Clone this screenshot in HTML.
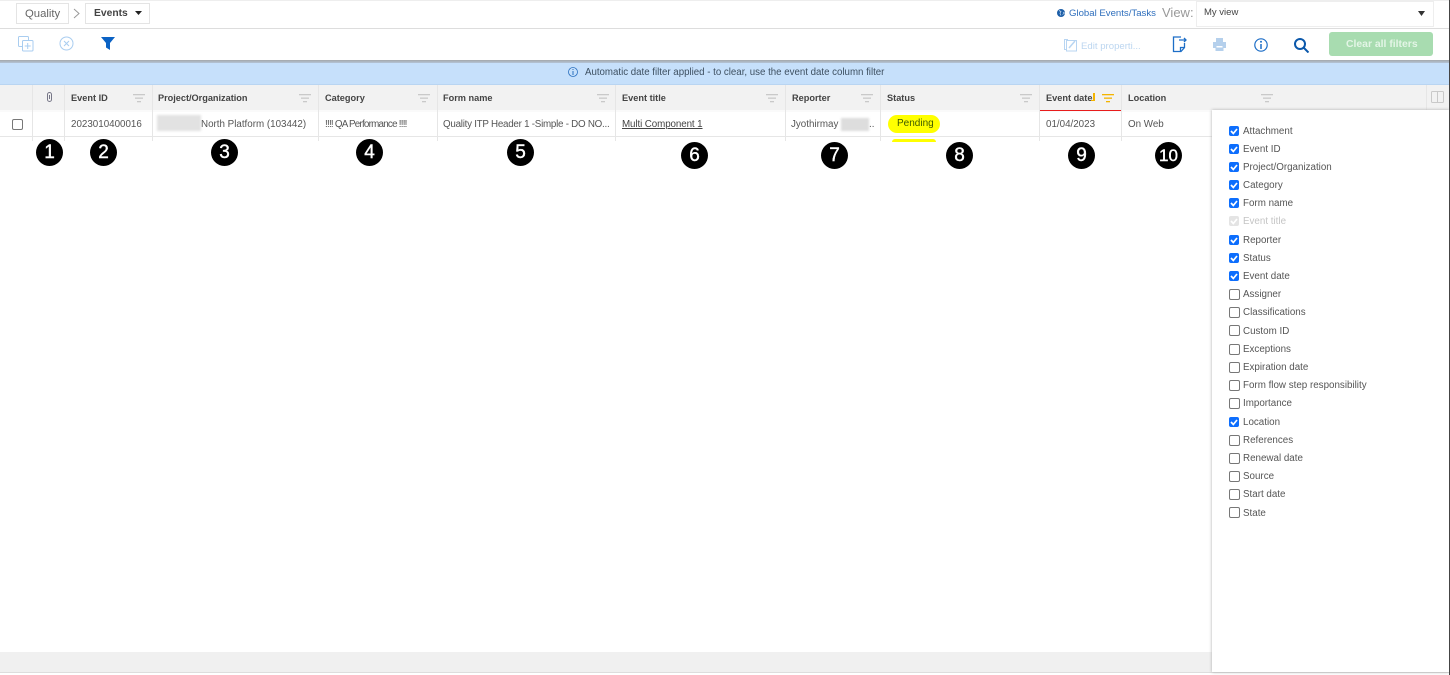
<!DOCTYPE html>
<html><head><meta charset="utf-8"><style>
html,body{margin:0;padding:0;background:#fff}
#p{position:relative;width:1450px;height:675px;overflow:hidden;background:#fff;font-family:"Liberation Sans",sans-serif;font-size:10px;color:#555}
#p div,#p span.t,#p svg{position:absolute}
.t{position:absolute;white-space:nowrap;line-height:12px}
.h{font-weight:bold;color:#444;font-size:9.2px;top:92px}
.c{top:119px;font-size:9.8px;color:#555}
.v{position:absolute;width:1px;background:#e6e6e6;top:85px;height:56px}
.n{width:27px;height:27px;border-radius:50%;background:#000;color:#fff;font-size:19px;line-height:27px;text-align:center;-webkit-text-stroke:.4px #fff}
.k{width:10px;height:10px;left:1229px;border-radius:2px;background:#0d6efd}
.u{width:9px;height:9px;left:1229px;border-radius:2px;border:1px solid #777;background:#fff}
.l{left:1243px;font-size:9.8px;color:#555;margin-top:1px}
</style></head><body><div id="p">
<div style="left:0;top:0;width:1450px;height:1px;background:#eee"></div>
<div style="left:0;top:28px;width:1450px;height:1px;background:#ddd"></div>
<div style="left:16px;top:3px;width:51px;height:19px;border:1px solid #e4e4e4"></div>
<span class="t" style="left:25px;top:8px;font-size:11.300px;color:#666">Quality</span>
<svg style="left:73px;top:8px" width="8" height="11"><path d="M1 1l5 4.500-5 4.500" fill="none" stroke="#999"/></svg>
<div style="left:85px;top:3px;width:63px;height:19px;border:1px solid #e4e4e4"></div>
<span class="t" style="left:94px;top:8px;font-size:10.300px;font-weight:bold;color:#444">Events</span>
<svg style="left:135px;top:11px" width="7" height="4"><path d="M0 0h7L3.500 4z" fill="#222"/></svg>
<svg style="left:1057px;top:9px" width="8" height="8"><circle cx="4" cy="4" r="4" fill="#1d5fa8"/><path d="M2 1.500l2 1-1 2 1 2M6 3l1.500 1-2 1.500" stroke="#cfe0f2" stroke-width=".7" fill="none"/></svg>
<span class="t" style="left:1069px;top:8px;font-size:9.600px;color:#2f6fbd">Global Events/Tasks</span>
<span class="t" style="left:1162px;top:7px;font-size:13px;color:#999">View:</span>
<div style="left:1196px;top:1px;width:236px;height:24px;border:1px solid #eee"></div>
<span class="t" style="left:1204px;top:7px;font-size:9.500px;color:#444">My view</span>
<svg style="left:1418px;top:11px" width="7" height="5"><path d="M0 0h7L3.500 5z" fill="#333"/></svg>

<svg style="left:18px;top:36px" width="16" height="16" fill="none" stroke="#a9cdf0"><rect x=".5" y=".5" width="10" height="10" rx="1"/><rect x="4.500" y="4.500" width="10.500" height="10.500" rx="1" fill="#fff"/><path d="M9.700 7v6M6.700 10h6"/></svg>
<svg style="left:59px;top:36px" width="15" height="15" fill="none" stroke="#a9cdf0"><circle cx="7.500" cy="7.500" r="6.500"/><path d="M5 5l5 5M10 5l-5 5"/></svg>
<svg style="left:101px;top:37px" width="14" height="13"><path d="M0 0h14L9 6v7L5 10.500V6z" fill="#0b62c4"/></svg>
<svg style="left:1064px;top:38px" width="14" height="14" fill="none" stroke="#b8d5f2"><rect x=".5" y="1.500" width="3" height="10"/><rect x="2.500" y="2.500" width="10" height="10.500" fill="#fff"/><path d="M5 10l6-7" stroke-width="1.500"/></svg>
<span class="t" style="left:1081px;top:41px;font-size:9.600px;color:#bcd6f0">Edit properti...</span>
<svg style="left:1172px;top:36px" width="15" height="17" fill="none" stroke="#1d6ec7" stroke-width="1.300"><path d="M9 1H1.500v14.500H9l3.500-4V7"/><path d="M7 4h7M12 2l2 2-2 2M8.500 15.500v-4h4" /></svg>
<svg style="left:1213px;top:38px" width="13" height="13"><path d="M3 0h7v4H3zM0 4h13v6h-2.500v3h-8v-3H0z" fill="#b5d0ec"/><rect x="3.500" y="8" width="6" height="1.500" fill="#fff"/></svg>
<svg style="left:1254px;top:38px" width="14" height="14" fill="none"><circle cx="7" cy="7" r="6.200" stroke="#1d6ec7" stroke-width="1.200"/><path d="M7 6v5" stroke="#1d6ec7" stroke-width="1.500"/><circle cx="7" cy="3.800" r="1" fill="#1d6ec7"/></svg>
<svg style="left:1294px;top:38px" width="15" height="15" fill="none" stroke="#0b58ab" stroke-width="2"><circle cx="6" cy="6" r="5"/><path d="M9.500 9.500L14.500 14.500"/></svg>
<div style="left:1329px;top:32px;width:104px;height:24px;border-radius:3px;background:#a8dcb0"></div>
<span class="t" style="left:1346px;top:39px;font-size:10.400px;font-weight:bold;color:#e3f5e6">Clear all filters</span>

<div style="left:0;top:62px;width:1450px;height:23px;background:#c6e0fb;box-shadow:inset 0 -1px 0 #b9d5f2"></div>
<div style="left:0;top:60px;width:1450px;height:3px;background:linear-gradient(#a3a7ab,#b4c4d6)"></div>
<svg style="left:568px;top:67px" width="10" height="10" fill="none"><circle cx="5" cy="5" r="4.500" stroke="#2a6fbe" stroke-width=".8"/><path d="M5 4v4M5 2v1" stroke="#2a6fbe"/></svg>
<span class="t" style="left:585px;top:67px;font-size:9.700px;color:#3d4f60">Automatic date filter applied - to clear, use the event date column filter</span>

<div style="left:0;top:85px;width:1450px;height:25px;background:#f2f2f2"></div>
<div style="left:0;top:110px;width:1450px;height:2px;background:#fafafa"></div>
<div style="left:0;top:136px;width:1450px;height:1px;background:#e6e6e6"></div>
<i class="v" style="left:32px"></i><i class="v" style="left:64px"></i><i class="v" style="left:152px"></i><i class="v" style="left:318px"></i><i class="v" style="left:437px"></i><i class="v" style="left:615px"></i><i class="v" style="left:785px"></i><i class="v" style="left:880px"></i><i class="v" style="left:1039px"></i><i class="v" style="left:1121px"></i>
<i class="v" style="left:1426px;height:25px"></i>

<svg style="left:47px;top:92px" width="5" height="10" fill="none" stroke="#778" stroke-width="1"><rect x=".5" y=".5" width="4" height="9" rx="2"/><path d="M2.500 3v4"/></svg>
<span class="t h" style="left:71px">Event ID</span>
<span class="t h" style="left:158px;letter-spacing:-.02px">Project/Organization</span>
<span class="t h" style="left:325px">Category</span>
<span class="t h" style="left:443px">Form name</span>
<span class="t h" style="left:622px">Event title</span>
<span class="t h" style="left:792px">Reporter</span>
<span class="t h" style="left:887px">Status</span>
<span class="t h" style="left:1046px">Event date</span>
<span class="t h" style="left:1128px">Location</span>
<div style="left:1040px;top:109.500px;width:81px;height:1.500px;background:#e81c1c"></div>
<div style="left:1093px;top:93px;width:2px;height:8px;background:#f4b400"></div>
<div style="left:1091px;top:100px;width:4px;height:1px;background:#f4b400"></div>

<svg width="0" height="0" style="left:0;top:0"><defs><g id="f"><rect x="0" y="0" width="12" height="1.300"/><rect x="2" y="3.500" width="8" height="1.300"/><rect x="4" y="7" width="4" height="1.300"/></g></defs></svg>
<svg style="left:133px;top:94px" width="12" height="9" fill="#c9c9c9"><use href="#f"/></svg>
<svg style="left:299px;top:94px" width="12" height="9" fill="#c9c9c9"><use href="#f"/></svg>
<svg style="left:418px;top:94px" width="12" height="9" fill="#c9c9c9"><use href="#f"/></svg>
<svg style="left:597px;top:94px" width="12" height="9" fill="#c9c9c9"><use href="#f"/></svg>
<svg style="left:766px;top:94px" width="12" height="9" fill="#c9c9c9"><use href="#f"/></svg>
<svg style="left:861px;top:94px" width="12" height="9" fill="#c9c9c9"><use href="#f"/></svg>
<svg style="left:1020px;top:94px" width="12" height="9" fill="#c9c9c9"><use href="#f"/></svg>
<svg style="left:1102px;top:94px" width="12" height="9" fill="#f4b400"><use href="#f"/></svg>
<svg style="left:1261px;top:94px" width="12" height="9" fill="#c9c9c9"><use href="#f"/></svg>
<svg style="left:1431px;top:91px" width="13" height="12" fill="none" stroke="#c9c9c9"><rect x=".5" y=".5" width="12" height="11" rx="1"/><path d="M6.500 1v10"/></svg>

<div style="left:12px;top:119px;width:9px;height:9px;border:1px solid #777;border-radius:2px;background:#fff"></div>
<span class="t c" style="left:71px">2023010400016</span>
<div style="left:157px;top:115px;width:44px;height:16px;background:#e2e2e2;filter:blur(1px)"></div>
<span class="t c" style="left:201px">North Platform (103442)</span>
<span class="t c" style="left:325px;letter-spacing:-.75px">!!!! QA Performance !!!!</span>
<span class="t c" style="left:443px;letter-spacing:-.25px">Quality ITP Header 1 -Simple - DO NO...</span>
<span class="t c" style="left:622px;text-decoration:underline;color:#444;letter-spacing:-.1px">Multi Component 1</span>
<span class="t c" style="left:791px">Jyothirmay</span>
<div style="left:841px;top:118px;width:28px;height:13px;background:#ddd;filter:blur(1px)"></div>
<span class="t c" style="left:869px">..</span>
<div style="left:888px;top:115px;width:52px;height:18px;border-radius:9px;background:#ffff00"></div>
<span class="t" style="left:897px;top:118px;font-size:10px;color:#3d5a00">Pending</span>
<div style="left:892px;top:139px;width:44px;height:3px;border-radius:9px 9px 0 0;background:#ffff00"></div>
<span class="t c" style="left:1046px">01/04/2023</span>
<span class="t c" style="left:1128px">On Web</span>

<div class="n" style="left:36px;top:139px">1</div>
<div class="n" style="left:90px;top:139px">2</div>
<div class="n" style="left:211px;top:139px">3</div>
<div class="n" style="left:356px;top:139px">4</div>
<div class="n" style="left:507px;top:139px">5</div>
<div class="n" style="left:681px;top:142px">6</div>
<div class="n" style="left:821px;top:142px">7</div>
<div class="n" style="left:946px;top:142px">8</div>
<div class="n" style="left:1068px;top:142px">9</div>
<div class="n" style="left:1155px;top:142px;font-size:17px">10</div>

<div style="left:0;top:652px;width:1212px;height:20px;background:#f0f0f0"></div>
<div style="left:0;top:672px;width:1450px;height:1px;background:#ddd"></div>
<div style="left:1212px;top:110px;width:237px;height:562px;background:#fff;box-shadow:0 0 3px #aaa"></div>
<div style="left:1449px;top:0;width:1px;height:675px;background:#444"></div>

<svg width="0" height="0" style="left:0;top:0"><defs><path id="m" d="M2 5l2.300 2.500L8 3" fill="none" stroke="#fff" stroke-width="1.700"/></defs></svg>
<div class="k" style="top:126px"><svg width="10" height="10"><use href="#m"/></svg></div><span class="t l" style="top:125px">Attachment</span>
<div class="k" style="top:144px"><svg width="10" height="10"><use href="#m"/></svg></div><span class="t l" style="top:143px">Event ID</span>
<div class="k" style="top:162px"><svg width="10" height="10"><use href="#m"/></svg></div><span class="t l" style="top:161px">Project/Organization</span>
<div class="k" style="top:180px"><svg width="10" height="10"><use href="#m"/></svg></div><span class="t l" style="top:179px">Category</span>
<div class="k" style="top:198px"><svg width="10" height="10"><use href="#m"/></svg></div><span class="t l" style="top:197px">Form name</span>
<div class="k" style="top:216px;background:#e4e4e4"><svg width="10" height="10"><use href="#m"/></svg></div><span class="t l" style="top:215px;color:#c4c4c4">Event title</span>
<div class="k" style="top:235px"><svg width="10" height="10"><use href="#m"/></svg></div><span class="t l" style="top:234px">Reporter</span>
<div class="k" style="top:253px"><svg width="10" height="10"><use href="#m"/></svg></div><span class="t l" style="top:252px">Status</span>
<div class="k" style="top:271px"><svg width="10" height="10"><use href="#m"/></svg></div><span class="t l" style="top:270px">Event date</span>
<div class="u" style="top:289px"></div><span class="t l" style="top:288px">Assigner</span>
<div class="u" style="top:307px"></div><span class="t l" style="top:306px">Classifications</span>
<div class="u" style="top:325px"></div><span class="t l" style="top:325px">Custom ID</span>
<div class="u" style="top:344px"></div><span class="t l" style="top:343px">Exceptions</span>
<div class="u" style="top:362px"></div><span class="t l" style="top:361px">Expiration date</span>
<div class="u" style="top:380px"></div><span class="t l" style="top:379px">Form flow step responsibility</span>
<div class="u" style="top:398px"></div><span class="t l" style="top:397px">Importance</span>
<div class="k" style="top:417px"><svg width="10" height="10"><use href="#m"/></svg></div><span class="t l" style="top:416px">Location</span>
<div class="u" style="top:435px"></div><span class="t l" style="top:434px">References</span>
<div class="u" style="top:453px"></div><span class="t l" style="top:452px">Renewal date</span>
<div class="u" style="top:471px"></div><span class="t l" style="top:470px">Source</span>
<div class="u" style="top:489px"></div><span class="t l" style="top:488px">Start date</span>
<div class="u" style="top:507px"></div><span class="t l" style="top:507px">State</span>
</div></body></html>
